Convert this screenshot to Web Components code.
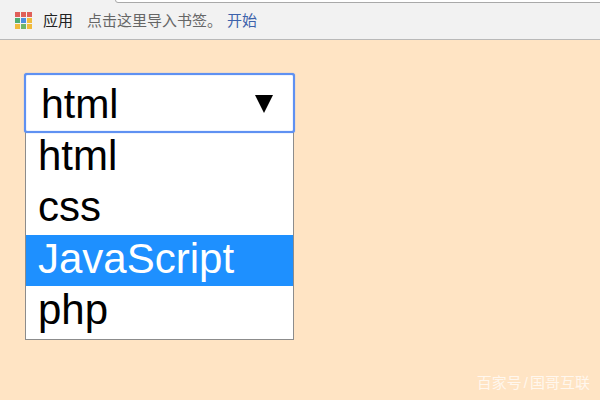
<!DOCTYPE html>
<html lang="zh">
<head>
<meta charset="utf-8">
<title>select</title>
<style>
  html, body { margin: 0; height: 100%; }
  body {
    width: 600px;
    height: 400px;
    overflow: hidden;
    background: #ffe4c4;
    font-family: "Liberation Sans", "Noto Sans CJK SC", sans-serif;
    display: flex;
    flex-direction: column;
    position: relative;
  }
</style>
</head>
<body>
<bookmark-bar></bookmark-bar>
<select-demo selected="html">
  <select-option>html</select-option>
  <select-option>css</select-option>
  <select-option active>JavaScript</select-option>
  <select-option>php</select-option>
</select-demo>
<water-mark>百家号<span style="margin:0 2px">/</span>国哥互联</water-mark>

<script>
class BookmarkBar extends HTMLElement {
    constructor() {
        super();
        this.attachShadow({ mode: 'open' });
    }

    connectedCallback() {
        const colors = ['#e0605a', '#e0605a', '#e0605a', '#4fae72', '#4c8fe0', '#f0bb3c', '#f0bb3c', '#6fb56a', '#f0bb3c'];
        const dots = colors.map(c => `<i style="background:${c}"></i>`).join('');
        this.shadowRoot.innerHTML = `
      <style>
        :host {
          display: flex;
          align-items: center;
          height: 39px;
          flex: none;
          background: #f2f2f2;
          border-bottom: 1px solid #b9b9b9;
          padding-left: 15px;
          font-size: 15px;
          font-family: "Liberation Sans", "Noto Sans CJK SC", sans-serif;
          position: relative;
        }
        .omni {
          position: absolute;
          left: 115px;
          right: -4px;
          top: -4px;
          height: 5px;
          background: #fff;
          border: 1px solid #a9a9a9;
          border-radius: 3px;
        }
        .apps {
          display: grid;
          grid-template-columns: repeat(3, 5px);
          grid-auto-rows: 5px;
          gap: 1px;
          margin-right: 11px;
          margin-top: 2px;
        }
        .apps i { display: block; }
        .name { color: #222; margin-right: 14px; }
        .hint { color: #666; margin-right: 5px; }
        .link { color: #3d62ab; }
      </style>
      <div class="omni"></div>
      <div class="apps">${dots}</div>
      <span class="name">应用</span>
      <span class="hint">点击这里导入书签。</span>
      <span class="link">开始</span>
    `;
    }
}

class SelectDemo extends HTMLElement {
    constructor() {
        super();
        this.attachShadow({ mode: 'open' });
    }

    connectedCallback() {
        const selected = this.getAttribute('selected') || '';
        this.shadowRoot.innerHTML = `
      <style>
        :host {
          display: flex;
          flex-direction: column;
          width: 271px;
          margin: 33px 0 0 24px;
          color: #000;
        }
        .box {
          display: flex;
          align-items: center;
          justify-content: space-between;
          height: 60px;
          box-sizing: border-box;
          background: #fff;
          border: 2px solid #5f91f2;
          border-radius: 3px;
          box-shadow: inset 0 0 1px #5f91f2, 0 0 1px #5f91f2;
          padding: 0 20px 0 15px;
          font-size: 41px;
          position: relative;
          z-index: 1;
        }
        .box span { padding-top: 2px; }
        .arrow { width: 18px; height: 18px; display: block; margin-top: 2px; }
        .list {
          display: flex;
          flex-direction: column;
          margin: -1px 1px 0;
          padding-bottom: 2px;
          background: #fff;
          border: 1px solid #8c8c8c;
        }
      </style>
      <div class="box">
        <span>${selected}</span>
        <svg class="arrow" viewBox="0 0 18 18"><path d="M0 0H18L9 18Z" fill="#000"/></svg>
      </div>
      <div class="list"><slot></slot></div>
    `;
    }
}

class SelectOption extends HTMLElement {
    constructor() {
        super();
        this.attachShadow({ mode: 'open' });
        this.shadowRoot.innerHTML = `
      <style>
        :host {
          display: block;
          height: 51px;
          line-height: 46px;
          padding-left: 12px;
          font-size: 42px;
          background: #fff;
          color: #000;
        }
        :host([active]), :host(:last-child) {
          line-height: 48px;
        }
        :host([active]) {
          background: #1e90ff;
          color: #fff;
        }
      </style>
      <slot></slot>
    `;
    }
}

class WaterMark extends HTMLElement {
    constructor() {
        super();
        this.attachShadow({ mode: 'open' });
        this.shadowRoot.innerHTML = `
      <style>
        :host {
          position: absolute;
          right: 10px;
          bottom: 9px;
          font-size: 15px;
          line-height: 16px;
          color: rgba(255, 255, 255, 0.72);
        }
      </style>
      <slot></slot>
    `;
    }
}

customElements.define('bookmark-bar', BookmarkBar);
customElements.define('select-demo', SelectDemo);
customElements.define('select-option', SelectOption);
customElements.define('water-mark', WaterMark);
</script>
</body>
</html>
